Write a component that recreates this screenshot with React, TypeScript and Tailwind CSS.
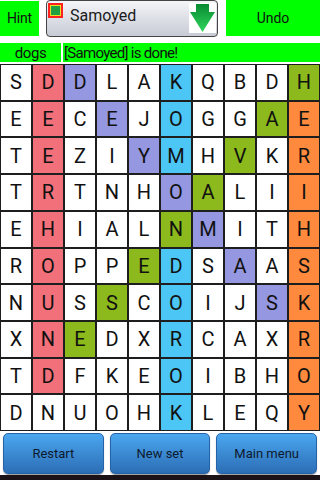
import React from "react";

const rows = [
  "SDDLAKQBDH",
  "EECEJOGGAE",
  "TEZIYMHVKR",
  "TRTNHOALII",
  "EHIALNMITH",
  "ROPPEDSAAS",
  "NUSSCOIJSK",
  "XNEDXRCAXR",
  "TDFKEOIBHO",
  "DNUOHKLEQY",
];

// p = pink, l = lavender, b = blue, o = olive, r = orange
const marks = [
  ".pl..b...o",
  ".p.l.b..or",
  ".p..lb.o.r",
  ".p...lo..r",
  ".p...ol..r",
  ".p..ob.l.r",
  ".p.o.b..lr",
  ".po..b...r",
  ".p...b...r",
  ".....b...r",
];

const cellBg: Record<string, string> = {
  ".": "bg-white",
  p: "bg-[#f2707a]",
  l: "bg-[#9598e0]",
  b: "bg-[#4cc6f5]",
  o: "bg-[#8cb91c]",
  r: "bg-[#ff8a3d]",
};

const Arrow = () => (
  <svg width="27" height="30" viewBox="0 0 27 30" className="bg-white">
    <defs>
      <linearGradient id="arr" x1="0" y1="0" x2="0" y2="1">
        <stop offset="0" stopColor="#0a8a30" />
        <stop offset="1" stopColor="#2fd65e" />
      </linearGradient>
    </defs>
    <path d="M7 1 H20 V9 H26 L13.5 29 L1 9 H7 Z" fill="url(#arr)" />
  </svg>
);

const App = () => {
  return (
    <div className="w-[320px] h-[480px] bg-white flex flex-col font-['Roboto',sans-serif] overflow-hidden">
      <div className="flex h-[37px]">
        <div className="w-[39px] h-[35px] mt-[1px] bg-[#00ff00] flex items-center justify-center text-[14px] tracking-[-0.2px] text-[#111]">Hint</div>
        <div className="ml-[7px] w-[172px] h-[37px] rounded-[4px] border border-[#444] bg-gradient-to-b from-[#f4f5f8] to-[#c7cbd5] flex items-center relative">
          <div className="absolute left-[1px] top-[2px] w-[15px] h-[15px] border-2 border-[#ff2020] bg-[#20a040] outline outline-1 outline-[#e8e020] -outline-offset-[3px]"></div>
          <span className="ml-[23px] mb-[6px] text-[16px] text-[#1a1a1a]">Samoyed</span>
          <div className="ml-auto mr-[1px] mb-[1px]"><Arrow /></div>
        </div>
        <div className="ml-[8px] flex-1 h-[36px] bg-[#00ff00] flex items-center justify-center text-[14px] text-[#111]">Undo</div>
      </div>
      <div className="flex mt-[6px] h-[19px] gap-[2px]">
        <div className="w-[61px] bg-[#00ff00] flex items-end justify-center text-[15px] leading-[18px] tracking-[-0.4px] text-[#111]">dogs</div>
        <div className="flex-1 bg-[#00ff00] flex items-end text-[15px] leading-[18px] tracking-[-0.7px] text-[#111] pl-[1px]">[Samoyed] is done!</div>
      </div>
      <div className="mt-[2px] h-[367px] bg-[#1e1e1e] p-[1px] gap-[2px] grid grid-cols-10 grid-rows-10">
        {rows.map((row, r) =>
          row.split("").map((ch, c) => (
            <div key={r + "-" + c} className={`${cellBg[marks[r][c]]} flex items-center justify-center text-[20px] text-[#111]`}>
              {ch}
            </div>
          ))
        )}
      </div>
      <div className="flex gap-[6px] px-[3px] pt-[2px] pb-[1px]">
        {["Restart", "New set", "Main menu"].map((t) => (
          <button key={t} className="flex-1 h-[41px] rounded-[5px] border border-[#2563a8] bg-gradient-to-b from-[#4ba7ef] to-[#2c6eb6] text-[13px] text-[#0d1a2e] shadow-[0_1px_1px_rgba(0,0,0,0.4)]">
            {t}
          </button>
        ))}
      </div>
      <div className="flex-1 bg-[#1a1216]"></div>
    </div>
  );
};

export default App;
